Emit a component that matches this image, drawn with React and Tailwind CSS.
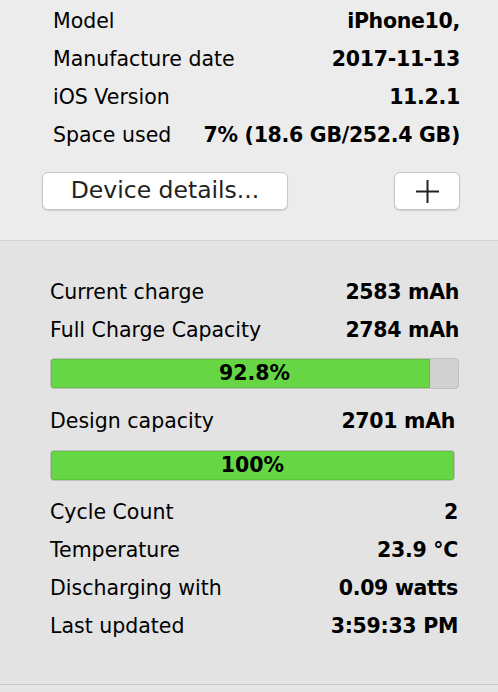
import React from "react";

const deviceRows = [
  ["Model", "iPhone10,"],
  ["Manufacture date", "2017-11-13"],
  ["iOS Version", "11.2.1"],
  ["Space used", "7% (18.6 GB/252.4 GB)"],
];

function Row({ label, value, className = "" }) {
  return (
    <div className={`h-[38px] flex items-center justify-between ${className}`}>
      <span className="text-black">{label}</span>
      <span className="font-bold text-black tracking-[-0.3px]">{value}</span>
    </div>
  );
}

function Bar({ percent, label, className = "" }) {
  return (
    <div className={`relative h-[31px] rounded-[4px] bg-[#d1d1d1] border border-[#c0c0c0] overflow-hidden ${className}`}>
      <div className="h-full bg-[#66d645] shadow-[inset_0_0_0_1px_#5cc43e]" style={{ width: `${percent}%` }} />
      <div className="absolute inset-0 flex items-center justify-center font-bold text-black">{label}</div>
    </div>
  );
}

export default function App() {
  return (
    <div
      className="w-[498px] h-[692px] overflow-hidden bg-[#e6e6e6] text-[20.5px] leading-none"
      style={{ fontFamily: '"DejaVu Sans", "Liberation Sans", sans-serif' }}
    >
      <section className="h-[241px] bg-[#ececec] border-b border-[#d3d3d3] pt-[2px] pl-[53px] pr-[38px]">
        {deviceRows.map(([label, value]) => (
          <Row key={label} label={label} value={value} />
        ))}
        <div className="mt-[18px] -ml-[11px] flex items-center justify-between">
          <button className="w-[246px] h-[38px] rounded-[6px] bg-white border border-[#c6c6c6] shadow-[0_1px_1px_rgba(0,0,0,0.12)] text-[23.5px] text-[#222] flex items-center justify-center">
            Device details...
          </button>
          <button className="w-[66px] h-[38px] rounded-[6px] bg-white border border-[#c6c6c6] shadow-[0_1px_1px_rgba(0,0,0,0.12)] flex items-center justify-center">
            <svg width="23" height="23" viewBox="0 0 23 23">
              <path d="M11.5 0V23M0 11.5H23" stroke="#222" strokeWidth="2" />
            </svg>
          </button>
        </div>
      </section>

      <section className="h-[444px] bg-[#e3e3e3] border-b border-[#c8c8c8] pt-[32px] pl-[50px] pr-[39px]">
        <Row label="Current charge" value="2583 mAh" />
        <Row label="Full Charge Capacity" value="2784 mAh" />
        <Bar percent={93} label="92.8%" className="mt-[9px]" />
        <Row label="Design capacity" value="2701 mAh" className="mt-[13px] mr-[4px]" />
        <Bar percent={100} label="100%" className="mt-[10px] mr-[4px]" />
        <div className="mt-[12px] mr-[1px]">
          <Row label="Cycle Count" value="2" />
          <Row label="Temperature" value="23.9 °C" />
          <Row label="Discharging with" value="0.09 watts" />
          <Row label="Last updated" value="3:59:33 PM" />
        </div>
      </section>
    </div>
  );
}
